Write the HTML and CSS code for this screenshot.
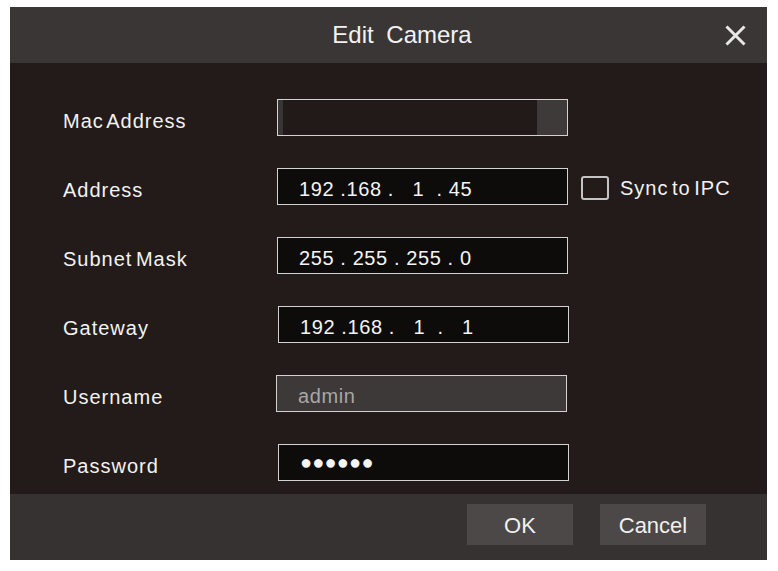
FILE: index.html
```html
<!DOCTYPE html>
<html lang="en">
<head>
<meta charset="utf-8">
<title>Edit Camera</title>
<link rel="stylesheet" href="styles.css">
</head>
<body>
<div class="dialog">
  <div class="header">
    <div class="title">Edit Camera</div>
    <button class="close" aria-label="Close">
      <svg width="21" height="21" viewBox="0 0 21 21"><path d="M1.5 1.5 L19.5 19.5 M19.5 1.5 L1.5 19.5" stroke="#e8e8e8" stroke-width="3" fill="none"/></svg>
    </button>
  </div>
  <div class="body">
    <div class="row">
      <span class="label">Mac Address</span>
      <div class="field mac"><span class="mac-fill"></span><span class="mac-side"></span></div>
    </div>
    <div class="row">
      <span class="label">Address</span>
      <div class="field ip">192 .168 .   1  . 45</div>
      <label class="sync"><span class="check"></span><span class="sync-text">Sync to IPC</span></label>
    </div>
    <div class="row">
      <span class="label">Subnet Mask</span>
      <div class="field ip">255 . 255 . 255 . 0</div>
    </div>
    <div class="row">
      <span class="label">Gateway</span>
      <div class="field ip shift">192 .168 .   1  .   1</div>
    </div>
    <div class="row">
      <span class="label">Username</span>
      <div class="field user">admin</div>
    </div>
    <div class="row">
      <span class="label">Password</span>
      <div class="field pass shift">●●●●●●</div>
    </div>
  </div>
  <div class="footer">
    <button class="btn">OK</button>
    <button class="btn">Cancel</button>
  </div>
</div>
</body>
</html>
```

FILE: styles.css
```css
* { box-sizing: border-box; }

html, body {
  margin: 0;
  padding: 0;
  background: #ffffff;
}

body {
  font-family: "Liberation Sans", Arial, sans-serif;
  color: #f0f0f0;
  padding: 7px 11px 0 10px;
}

.dialog {
  width: 757px;
  height: 553px;
  display: flex;
  flex-direction: column;
  background: #221b1a;
}

.header {
  height: 56px;
  background: #3a3635;
  display: flex;
  align-items: center;
}

.title {
  flex: 1;
  text-align: center;
  padding-left: 69px;
  font-size: 24px;
  word-spacing: 6px;
  color: #f2f2f2;
}

.close {
  width: 21px;
  height: 21px;
  margin: 1px 21px 0 0;
  padding: 0;
  border: none;
  background: none;
  display: flex;
}

.body {
  flex: 1;
  padding: 36px 0 0 53px;
  display: flex;
  flex-direction: column;
  gap: 32px;
}

.row {
  height: 37px;
  display: flex;
  align-items: center;
}

.label {
  width: 214px;
  padding-top: 7px;
  font-size: 20px;
  letter-spacing: 1px;
  word-spacing: -3px;
  color: #f2f2f2;
}

.field {
  width: 291px;
  height: 37px;
  border: 1px solid #d2d2d2;
  background: #0e0c0b;
  display: flex;
  align-items: center;
  padding: 5px 0 0 21px;
  font-size: 20px;
  letter-spacing: 0.6px;
  white-space: pre;
  color: #f4f4f4;
}

.field.shift {
  margin-left: 1px;
}

.mac {
  background: #211a19;
  padding: 0;
  align-items: stretch;
}

.mac-fill {
  flex: 1;
  border-left: 5px solid #3a3535;
}

.mac-side {
  width: 30px;
  background: #3d3a39;
}

.user {
  background: #3c3938;
  color: #a9a7a6;
  margin-left: -1px;
}

.pass {
  padding-top: 0;
  font-size: 20px;
  letter-spacing: 0.2px;
}

.sync {
  display: flex;
  align-items: center;
  margin-left: 13px;
}

.check {
  width: 28px;
  height: 24px;
  border: 2px solid #c4c4c4;
  border-radius: 3px;
  margin-top: 2px;
}

.sync-text {
  margin-left: 11px;
  padding-top: 4px;
  font-size: 20px;
  letter-spacing: 1px;
  word-spacing: -3px;
  color: #f2f2f2;
}

.footer {
  height: 66px;
  background: #363231;
  display: flex;
  justify-content: flex-end;
  align-items: flex-start;
  gap: 27px;
  padding: 10px 61px 0 0;
}

.btn {
  width: 106px;
  height: 41px;
  border: none;
  background: #4b4847;
  color: #f0f0f0;
  font-family: "Liberation Sans", Arial, sans-serif;
  font-size: 22px;
  padding: 3px 0 0 0;
}
```
